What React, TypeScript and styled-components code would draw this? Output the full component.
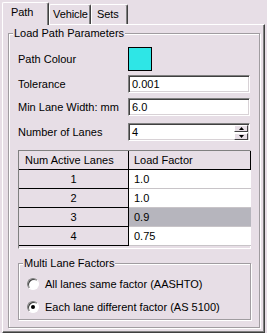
import React from "react";
import styled, { createGlobalStyle } from "styled-components";

const BG = "#E7DEE6";

const Global = createGlobalStyle`
  html, body { margin: 0; padding: 0; background: ${BG}; }
  body { font-family: Tahoma, "Liberation Sans", Arial, sans-serif; font-size: 11px; color: #000; }
`;

const Frame = styled.div`
  width: 267px;
  height: 333px;
  background: ${BG};
  display: flex;
  flex-direction: column;
  box-sizing: border-box;
`;

const TabBar = styled.div`
  display: flex;
  align-items: flex-end;
  padding: 2px 0 0 2px;
  height: 24px;
  box-sizing: border-box;
  position: relative;
  z-index: 2;
`;

const Tab = styled.div<{ $active?: boolean; $w: number; $pl: number }>`
  box-sizing: border-box;
  flex: none;
  height: ${(p) => (p.$active ? 23 : 20)}px;
  margin-bottom: ${(p) => (p.$active ? -1 : 0)}px;
  padding: 3px 0 0 ${(p) => p.$pl}px;
  width: ${(p) => p.$w}px;
  border-top: 1px solid #fff;
  border-left: 1px solid #fff;
  border-right: 1px solid #404040;
  box-shadow: inset -1px 0 0 #808080;
  border-radius: 2px 2px 0 0;
  background: ${BG};
  font-size: 11px;
  line-height: 13px;
  white-space: nowrap;
  letter-spacing: -0.1px;
`;

const Panel = styled.div`
  flex: 1;
  margin: 0 2px 2px 2px;
  box-sizing: border-box;
  border-top: 1px solid #fff;
  border-left: 1px solid #fff;
  border-right: 1px solid #404040;
  border-bottom: 1px solid #404040;
  box-shadow: inset -1px -1px 0 #808080;
  padding: 8px 4px 4px 5px;
  display: flex;
`;

const Group = styled.div<{ $pad: string }>`
  position: relative;
  flex: 1;
  box-sizing: border-box;
  border: 1px solid #A09CA0;
  box-shadow: 1px 1px 0 #fff, inset 1px 1px 0 #fff;
  padding: ${(p) => p.$pad};
  display: flex;
  flex-direction: column;
`;

const SubGroup = styled(Group)`
  flex: none;
  width: 233px;
  margin-top: 14px;
`;

const GroupTitle = styled.span`
  position: absolute;
  top: -7px;
  left: 4px;
  padding: 0 1px;
  background: ${BG};
  line-height: 13px;
  white-space: nowrap;
`;

const FieldRow = styled.div<{ $top: number; $h: number }>`
  display: grid;
  grid-template-columns: 110px 122px;
  align-items: center;
  height: ${(p) => p.$h}px;
  margin-top: ${(p) => p.$top}px;
`;

const Label = styled.span`
  white-space: nowrap;
`;

const Swatch = styled.div`
  width: 24px;
  height: 24px;
  box-sizing: border-box;
  border: 1px solid #000;
  background: #2EE6E6;
`;

const Input = styled.div`
  height: 18px;
  box-sizing: border-box;
  background: #fff;
  border-top: 1px solid #808080;
  border-left: 1px solid #808080;
  border-right: 1px solid #fff;
  border-bottom: 1px solid #fff;
  box-shadow: inset 1px 1px 0 #404040, inset -1px -1px 0 #D8D2D6;
  padding: 2px 0 0 3px;
  line-height: 13px;
  display: flex;
  justify-content: space-between;
  align-items: flex-start;
`;

const SpinCol = styled.div`
  display: flex;
  flex-direction: column;
  margin: -1px 1px 0 0;
`;

const SpinBtn = styled.div`
  width: 14px;
  height: 7px;
  box-sizing: border-box;
  background: ${BG};
  border-top: 1px solid #fff;
  border-left: 1px solid #fff;
  border-right: 1px solid #404040;
  border-bottom: 1px solid #404040;
  display: flex;
  align-items: center;
  justify-content: center;
  & + & { margin-top: 1px; }
`;

const Table = styled.div`
  margin-top: 9px;
  width: 233px;
  height: 99px;
  box-sizing: border-box;
  border-top: 1px solid #808080;
  border-left: 1px solid #808080;
  border-right: 1px solid #fff;
  border-bottom: 1px solid #fff;
  display: grid;
  grid-template-columns: 110px 122px;
  grid-auto-rows: 19px;
  align-content: start;
  background: ${BG};
`;

const HeadCell = styled.div<{ $last?: boolean }>`
  box-sizing: border-box;
  border-bottom: 1px solid #000;
  border-right: 1px solid #000;
  padding: 3px 0 0 ${(p) => (p.$last ? 5 : 6)}px;
  line-height: 13px;
  white-space: nowrap;
`;

const IndexCell = styled.div`
  box-sizing: border-box;
  border-bottom: 1px solid #000;
  border-right: 1px solid #000;
  text-align: center;
  padding-top: 3px;
  line-height: 13px;
`;

const ValueCell = styled.div<{ $sel?: boolean }>`
  box-sizing: border-box;
  background: ${(p) => (p.$sel ? "#B6B5BD" : "#fff")};
  border-bottom: 1px solid #C8C4C8;
  padding: 3px 0 0 5px;
  line-height: 13px;
`;

const RadioRow = styled.label`
  display: flex;
  align-items: center;
  gap: 6px;
  height: 13px;
  white-space: nowrap;
  & + & { margin-top: 10px; }
`;

const RadioCircle = styled.span<{ $on?: boolean }>`
  width: 12px;
  height: 12px;
  box-sizing: border-box;
  border-radius: 50%;
  background: #fff;
  border: 1px solid;
  border-color: #808080 #fff #fff #808080;
  box-shadow: inset 1px 1px 0 #404040;
  display: flex;
  align-items: center;
  justify-content: center;
  &::after {
    content: "";
    width: 4px;
    height: 4px;
    border-radius: 50%;
    background: ${(p) => (p.$on ? "#000" : "transparent")};
  }
`;

const rows = [
  { n: 1, v: "1.0" },
  { n: 2, v: "1.0" },
  { n: 3, v: "0.9", sel: true },
  { n: 4, v: "0.75" },
];

const Arrow = ({ up }: { up?: boolean }) => (
  <svg width="5" height="3" viewBox="0 0 5 3">
    <path d={up ? "M2.5 0 L5 3 L0 3 Z" : "M0 0 L5 0 L2.5 3 Z"} fill="#000" />
  </svg>
);

export default function App() {
  return (
    <Frame>
      <Global />
      <TabBar>
        <Tab $active $w={47} $pl={8}>Path</Tab>
        <Tab $w={42} $pl={3}>Vehicle</Tab>
        <Tab $w={37} $pl={5}>Sets</Tab>
      </TabBar>
      <Panel>
        <Group $pad="0 0 7px 9px">
          <GroupTitle>Load Path Parameters</GroupTitle>
          <FieldRow $top={13} $h={24}>
            <Label>Path Colour</Label>
            <Swatch />
          </FieldRow>
          <FieldRow $top={4} $h={18}>
            <Label>Tolerance</Label>
            <Input>0.001</Input>
          </FieldRow>
          <FieldRow $top={5} $h={18}>
            <Label>Min Lane Width: mm</Label>
            <Input>6.0</Input>
          </FieldRow>
          <FieldRow $top={7} $h={18}>
            <Label>Number of Lanes</Label>
            <Input>
              4
              <SpinCol>
                <SpinBtn><Arrow up /></SpinBtn>
                <SpinBtn><Arrow /></SpinBtn>
              </SpinCol>
            </Input>
          </FieldRow>
          <Table>
            <HeadCell>Num Active Lanes</HeadCell>
            <HeadCell $last>Load Factor</HeadCell>
            {rows.map((r) => (
              <React.Fragment key={r.n}>
                <IndexCell>{r.n}</IndexCell>
                <ValueCell $sel={r.sel}>{r.v}</ValueCell>
              </React.Fragment>
            ))}
          </Table>
          <SubGroup $pad="13px 0 6px 8px">
            <GroupTitle>Multi Lane Factors</GroupTitle>
            <RadioRow>
              <RadioCircle />
              All lanes same factor (AASHTO)
            </RadioRow>
            <RadioRow>
              <RadioCircle $on />
              Each lane different factor (AS 5100)
            </RadioRow>
          </SubGroup>
        </Group>
      </Panel>
    </Frame>
  );
}
